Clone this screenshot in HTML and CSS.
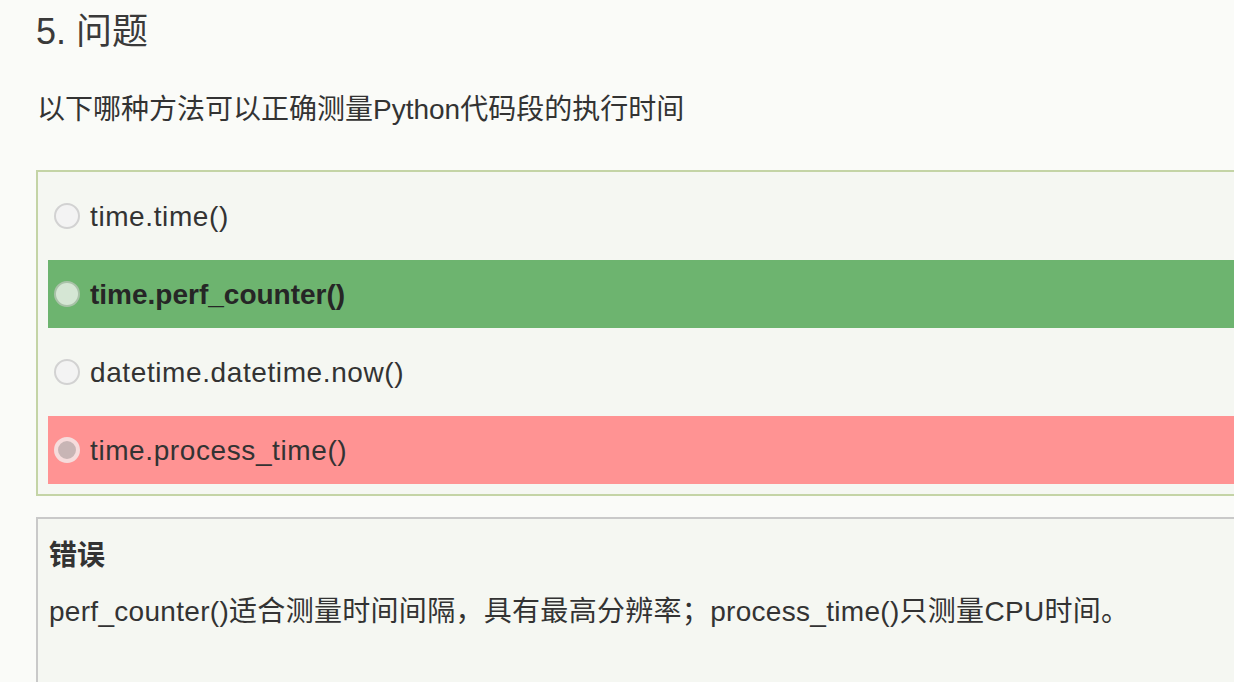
FILE: index.html
```html
<!DOCTYPE html>
<html lang="zh-CN">
<head>
<meta charset="utf-8">
<title>问题</title>
<link rel="stylesheet" href="styles.css">
</head>
<body>
<div class="page">
  <h3 class="title">5. 问题</h3>
  <p class="question">以下哪种方法可以正确测量Python代码段的执行时间</p>
  <div class="options">
    <div class="option"><span class="radio"></span><span class="label">time.time()</span></div>
    <div class="option correct"><span class="radio"></span><span class="label">time.perf_counter()</span></div>
    <div class="option"><span class="radio"></span><span class="label">datetime.datetime.now()</span></div>
    <div class="option wrong"><span class="radio"></span><span class="label">time.process_time()</span></div>
  </div>
  <div class="feedback">
    <div class="verdict">错误</div>
    <div class="explain">perf_counter()适合测量时间间隔，具有最高分辨率；process_time()只测量CPU时间。</div>
  </div>
</div>
</body>
</html>
```

FILE: styles.css
```css
html, body {
  margin: 0;
  padding: 0;
  overflow: hidden;
  background: #fafbf8;
}
body {
  font-family: "Liberation Sans", "Noto Sans CJK SC", sans-serif;
  color: #333;
}
.page {
  width: 1300px;
  padding-left: 36px;
  height: 682px;
}
.title {
  margin: 12px 0 0 0;
  font-size: 36px;
  line-height: 40px;
  font-weight: normal;
  color: #3a3a3a;
}
.question {
  margin: 38px 0 0 1px;
  font-size: 28px;
  line-height: 40px;
}
.options {
  margin-top: 40px;
  border: 2px solid #c4d4a6;
  background: #f5f7f2;
  padding: 10px;
  display: flex;
  flex-direction: column;
  gap: 10px;
}
.option {
  height: 68px;
  display: flex;
  align-items: center;
  padding-left: 6px;
  font-size: 28px;
}
.radio {
  width: 22px;
  height: 22px;
  border-radius: 50%;
  border: 2px solid #d2d2d2;
  background: #f3f3f3;
  flex: none;
  margin-right: 10px;
}
.label {
  position: relative;
  top: 1px;
  letter-spacing: 0.6px;
}
.correct {
  background: #6db46f;
}
.correct .label {
  font-weight: bold;
  color: #262626;
  letter-spacing: 0;
}
.correct .radio {
  background: #d5e6d4;
  border-color: #a9c2a8;
}
.wrong {
  background: #ff9393;
}
.wrong .radio {
  width: 18px;
  height: 18px;
  background: #c8b5b5;
  border: 4px solid #f6dcdc;
}
.feedback {
  margin-top: 21px;
  border: 2px solid #c9c9c9;
  background: #f5f7f2;
  padding: 17px 10px 0 11px;
  height: 300px;
}
.verdict {
  font-size: 28px;
  line-height: 40px;
  font-weight: bold;
  color: #333;
}
.explain {
  margin-top: 16px;
  font-size: 28px;
  line-height: 40px;
  letter-spacing: 0.3px;
}
```
